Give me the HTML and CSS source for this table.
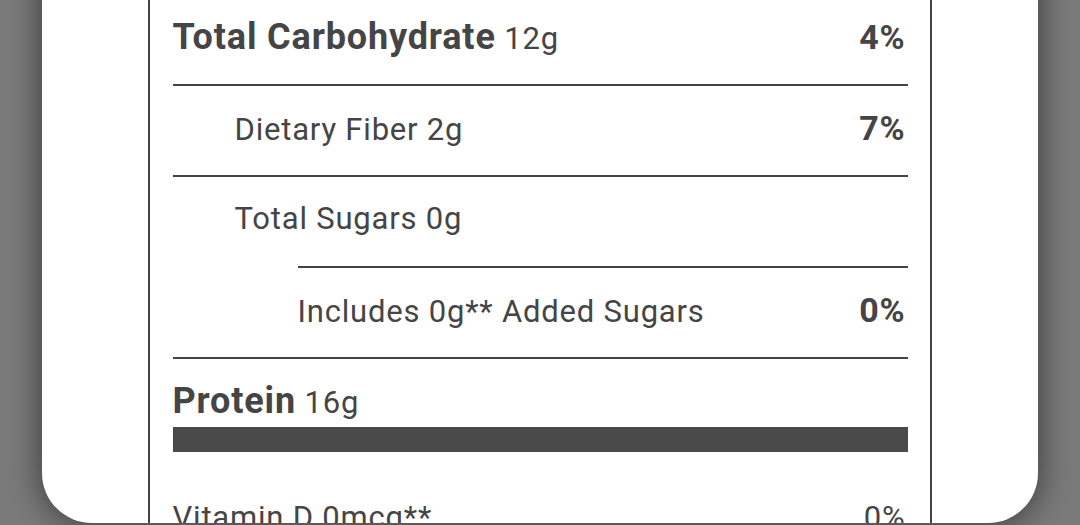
FILE: index.html
```html
<!DOCTYPE html>
<html>
<head>
<meta charset="utf-8">
<link rel="stylesheet" href="styles.css">
</head>
<body>
<div class="card">
  <div class="label">
    <div class="row">
      <span class="name"><b class="bold">Total Carbohydrate</b> 12g</span>
      <span class="dv">4%</span>
    </div>
    <div class="row indent1">
      <span class="name">Dietary Fiber 2g</span>
      <span class="dv">7%</span>
    </div>
    <div class="row indent1 partial">
      <span class="name">Total Sugars 0g</span>
    </div>
    <div class="row indent2">
      <span class="name">Includes 0g** Added Sugars</span>
      <span class="dv">0%</span>
    </div>
    <div class="row protein">
      <span class="name"><b class="bold">Protein</b> 16g</span>
    </div>
    <div class="thick"></div>
    <div class="row vit">
      <span class="name">Vitamin D 0mcg**</span>
      <span class="dv light">0%</span>
    </div>
  </div>
</div>
</body>
</html>
```
FILE: styles.css
```css
html, body {
  margin: 0;
  padding: 0;
  height: 525px;
  overflow: hidden;
  background: #7a7a7a;
}
body {
  font-family: Roboto, "Liberation Sans", sans-serif;
  color: #454545;
}
.card {
  margin: -60px 42px 0;
  height: 583px;
  background: #fff;
  border-radius: 0 0 50px 50px;
  box-shadow: 0 0 30px 4px rgba(0, 0, 0, 0.45);
  overflow: hidden;
  display: flex;
  justify-content: center;
}
.label {
  width: 735px;
  margin-left: -1px;
  padding: 55px 22px 0 23px;
  border-left: 2px solid #444;
  border-right: 2px solid #444;
  display: flex;
  flex-direction: column;
}
.row {
  flex-shrink: 0;
  height: 89px;
  border-bottom: 2px solid #444;
  display: flex;
  justify-content: space-between;
  align-items: baseline;
  box-sizing: content-box;
}
.row .name, .row .dv {
  font-size: 31px;
  line-height: 36px;
  padding-top: 24px;
  letter-spacing: 0.8px;
}
.bold {
  font-weight: 700;
  font-size: 36px;
  letter-spacing: 0.85px;
}
.row .dv {
  font-weight: 700;
  font-size: 34px;
  padding-right: 2px;
}
.row .dv.light { font-weight: 400; font-size: 31px; }
.indent1 { padding-left: 62px; }
.indent2 { padding-left: 125px; }
.partial {
  border-bottom: none;
  position: relative;
}
.partial::after {
  content: "";
  position: absolute;
  left: 125px;
  right: 0;
  bottom: 0;
  height: 2px;
  background: #444;
}
.row.partial { height: 91px; }
.row.protein {
  height: 68px;
  border-bottom: none;
}
.thick {
  flex-shrink: 0;
  height: 25px;
  background: #4a4a4a;
}
.vit {
  border-bottom: none;
}
.vit .name, .vit .dv { padding-top: 48px; }
```
